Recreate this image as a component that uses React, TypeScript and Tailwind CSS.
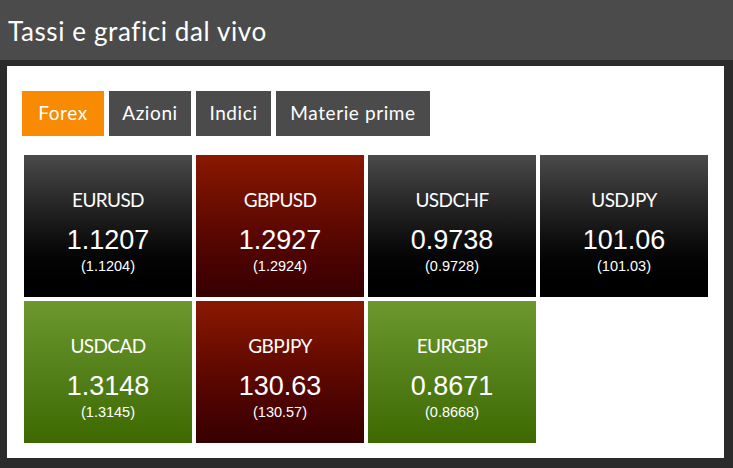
const tabs = [
  { label: "Forex", active: true, w: "w-[82px]" },
  { label: "Azioni", active: false, w: "w-[82px]" },
  { label: "Indici", active: false, w: "w-[75px]" },
  { label: "Materie prime", active: false, w: "w-[154px]" },
]

type Tone = "dark" | "red" | "green"

const rates: { pair: string; bid: string; prev: string; tone: Tone }[] = [
  { pair: "EURUSD", bid: "1.1207", prev: "(1.1204)", tone: "dark" },
  { pair: "GBPUSD", bid: "1.2927", prev: "(1.2924)", tone: "red" },
  { pair: "USDCHF", bid: "0.9738", prev: "(0.9728)", tone: "dark" },
  { pair: "USDJPY", bid: "101.06", prev: "(101.03)", tone: "dark" },
  { pair: "USDCAD", bid: "1.3148", prev: "(1.3145)", tone: "green" },
  { pair: "GBPJPY", bid: "130.63", prev: "(130.57)", tone: "red" },
  { pair: "EURGBP", bid: "0.8671", prev: "(0.8668)", tone: "green" },
]

const toneClass: Record<Tone, string> = {
  dark: "bg-gradient-to-b from-[#4b4b4b] to-[#000000]",
  red: "bg-gradient-to-b from-[#8a1800] to-[#360000]",
  green: "bg-gradient-to-b from-[#6c982e] to-[#3d6900]",
}

const RateTile = ({ pair, bid, prev, tone }: (typeof rates)[number]) => {
  return (
    <div className={`h-[142px] flex flex-col items-center text-white ${toneClass[tone]}`}>
      <div className="mt-[34px] text-[19px] leading-[22px] tracking-[-0.6px] font-['Lato',sans-serif] font-normal">
        {pair}
      </div>
      <div className="mt-[14px] text-[27px] leading-[30px] font-['Liberation_Sans',Arial,sans-serif]">
        {bid}
      </div>
      <div className="mt-[2px] text-[14.5px] leading-[18px] font-['Liberation_Sans',Arial,sans-serif]">
        {prev}
      </div>
    </div>
  )
}

export default function App() {
  return (
    <div className="w-[733px] h-[468px] bg-[#2b2b2b] overflow-hidden">
      <div className="h-[60px] bg-[#4b4b4b] flex items-center pl-[8px] pt-[2px]">
        <h1 className="text-[26px] text-white font-['Lato',sans-serif] tracking-[0.6px]">
          Tassi e grafici dal vivo
        </h1>
      </div>
      <div className="mt-[6px] ml-[7px] w-[717px] h-[392px] bg-white pt-[25px] px-[15px]">
        <div className="flex gap-[5px]">
          {tabs.map((tab) => (
            <div
              key={tab.label}
              className={`${tab.w} h-[45px] flex items-center justify-center text-[19px] tracking-[0.6px] text-white font-['Lato',sans-serif] ${
                tab.active ? "bg-[#f98a03]" : "bg-[#4b4b4b]"
              }`}
            >
              {tab.label}
            </div>
          ))}
        </div>
        <div className="mt-[19px] ml-[2px] w-[684px] grid grid-cols-4 gap-[4px]">
          {rates.map((rate) => (
            <RateTile key={rate.pair} {...rate} />
          ))}
        </div>
      </div>
    </div>
  )
}
